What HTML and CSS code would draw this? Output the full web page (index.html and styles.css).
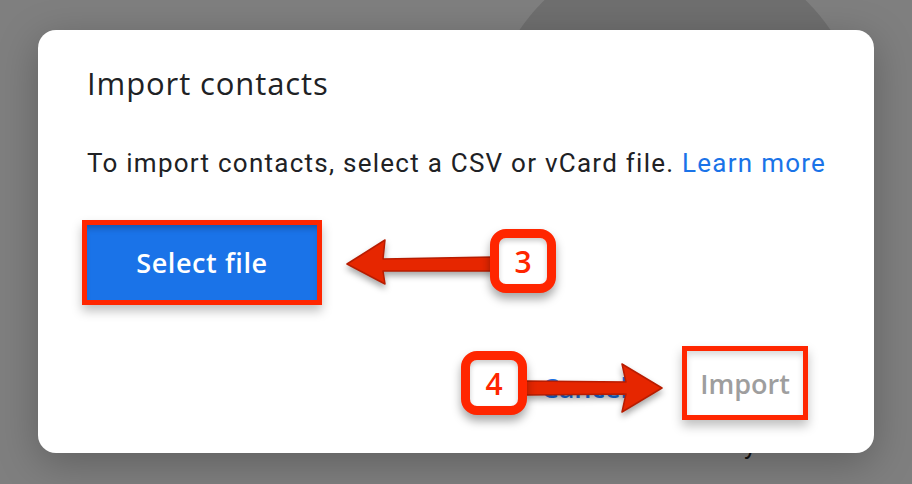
FILE: index.html
```html
<!DOCTYPE html>
<html lang="en">
<head>
    <meta charset="UTF-8">
    <title>Import contacts</title>
    <link rel="stylesheet" href="styles.css">
</head>
<body>

    <div class="backdrop-circle"></div>

    <div class="dialog">
        <h2 class="dialog-title">Import contacts</h2>
        <p class="dialog-text">To import contacts, select a CSV or vCard file. <a href="#">Learn more</a></p>

        <div class="select-row">
            <button class="select-btn">Select file</button>
        </div>

        <div class="actions">
            <button class="text-btn cancel">Cancel</button>
            <button class="text-btn import">Import</button>
        </div>

        <!-- annotations -->
        <svg class="arrow arrow-3" width="160" height="60" viewBox="0 0 160 60">
            <path d="M150 25 L40 27 L42 8 L4 32 L42 52 L40 39 L150 39 Z" fill="#e62600" stroke="#b81c00" stroke-width="1.5" stroke-linejoin="round"/>
        </svg>
        <div class="badge badge-3">3</div>

        <svg class="arrow arrow-4" width="160" height="60" viewBox="0 0 160 60">
            <path d="M6 23 L106 24 L102 6 L142 30 L102 54 L106 36 L6 37 Z" fill="#e62600" stroke="#b81c00" stroke-width="1.5" stroke-linejoin="round"/>
        </svg>
        <div class="badge badge-4">4</div>
    </div>

    <div class="below-text">y</div>

</body>
</html>
```

FILE: styles.css
```css
* {
    box-sizing: border-box;
}

html, body {
    margin: 0;
    padding: 0;
    height: 484px;
    overflow: hidden;
}

body {
    background-color: #7f7f7f;
    font-family: Roboto, "Noto Sans", Arial, sans-serif;
    position: relative;
    padding: 30px 38px 0 38px;
}

.backdrop-circle {
    position: absolute;
    left: 488px;
    top: -53px;
    width: 374px;
    height: 374px;
    border-radius: 50%;
    background-color: #6f6f6f;
}

.below-text {
    position: absolute;
    left: 744px;
    top: 430px;
    font-size: 26px;
    color: #111;
}

.dialog {
    position: relative;
    z-index: 2;
    width: 836px;
    height: 423px;
    background-color: #fff;
    border-radius: 18px;
    box-shadow: 0 10px 40px rgba(0, 0, 0, 0.25);
    padding: 35px 49px 0 49px;
}

.dialog-title {
    margin: 0;
    font-family: "Open Sans", Roboto, sans-serif;
    font-weight: 400;
    font-size: 31px;
    line-height: 36px;
    letter-spacing: 0.9px;
    color: #202124;
}

.dialog-text {
    margin: 46px 0 0 0;
    font-size: 26px;
    line-height: 32px;
    letter-spacing: 1.25px;
    color: #202124;
    white-space: nowrap;
}

.dialog-text a {
    color: #1a73e8;
    text-decoration: none;
}

.select-row {
    margin-top: 46px;
    height: 75px;
}

.select-btn {
    display: block;
    width: 230px;
    height: 75px;
    background-color: #1a73e8;
    color: #fff;
    border: none;
    font-family: "Open Sans", Roboto, sans-serif;
    font-size: 27px;
    font-weight: 600;
    letter-spacing: 0.6px;
    box-shadow: 0 0 0 5px #ff2600, 0 6px 10px 5px rgba(0, 0, 0, 0.25), inset 0 6px 6px -3px rgba(0, 0, 0, 0.25);
}

.actions {
    display: flex;
    justify-content: flex-end;
    align-items: center;
    gap: 54px;
    margin-top: 46px;
    padding-right: 17px;
}

.text-btn {
    background: none;
    border: none;
    font-family: "Open Sans", Roboto, sans-serif;
    font-size: 27px;
    font-weight: 600;
    padding: 0;
}

.cancel {
    color: #1a73e8;
    margin-top: 8px;
}

.import {
    color: #9e9e9e;
    width: 126px;
    height: 74px;
    border: 5px solid #ff2600;
    box-shadow: 0 6px 10px rgba(0, 0, 0, 0.25), inset 0 4px 6px rgba(0, 0, 0, 0.15);
}

.arrow {
    position: absolute;
    filter: drop-shadow(0 4px 3px rgba(0, 0, 0, 0.35));
}

.arrow-3 {
    left: 305px;
    top: 202px;
}

.arrow-4 {
    left: 482px;
    top: 328px;
}

.badge {
    position: absolute;
    width: 66px;
    height: 64px;
    border: 9px solid #ff2600;
    border-radius: 16px;
    background-color: #fff;
    color: #ff2600;
    font-family: "Open Sans", Roboto, sans-serif;
    font-size: 30px;
    font-weight: 600;
    display: flex;
    align-items: center;
    justify-content: center;
    box-shadow: 0 6px 10px rgba(0, 0, 0, 0.35), inset 0 3px 5px rgba(0, 0, 0, 0.2);
}

.badge-3 {
    left: 452px;
    top: 199px;
}

.badge-4 {
    left: 423px;
    top: 321px;
}
```
